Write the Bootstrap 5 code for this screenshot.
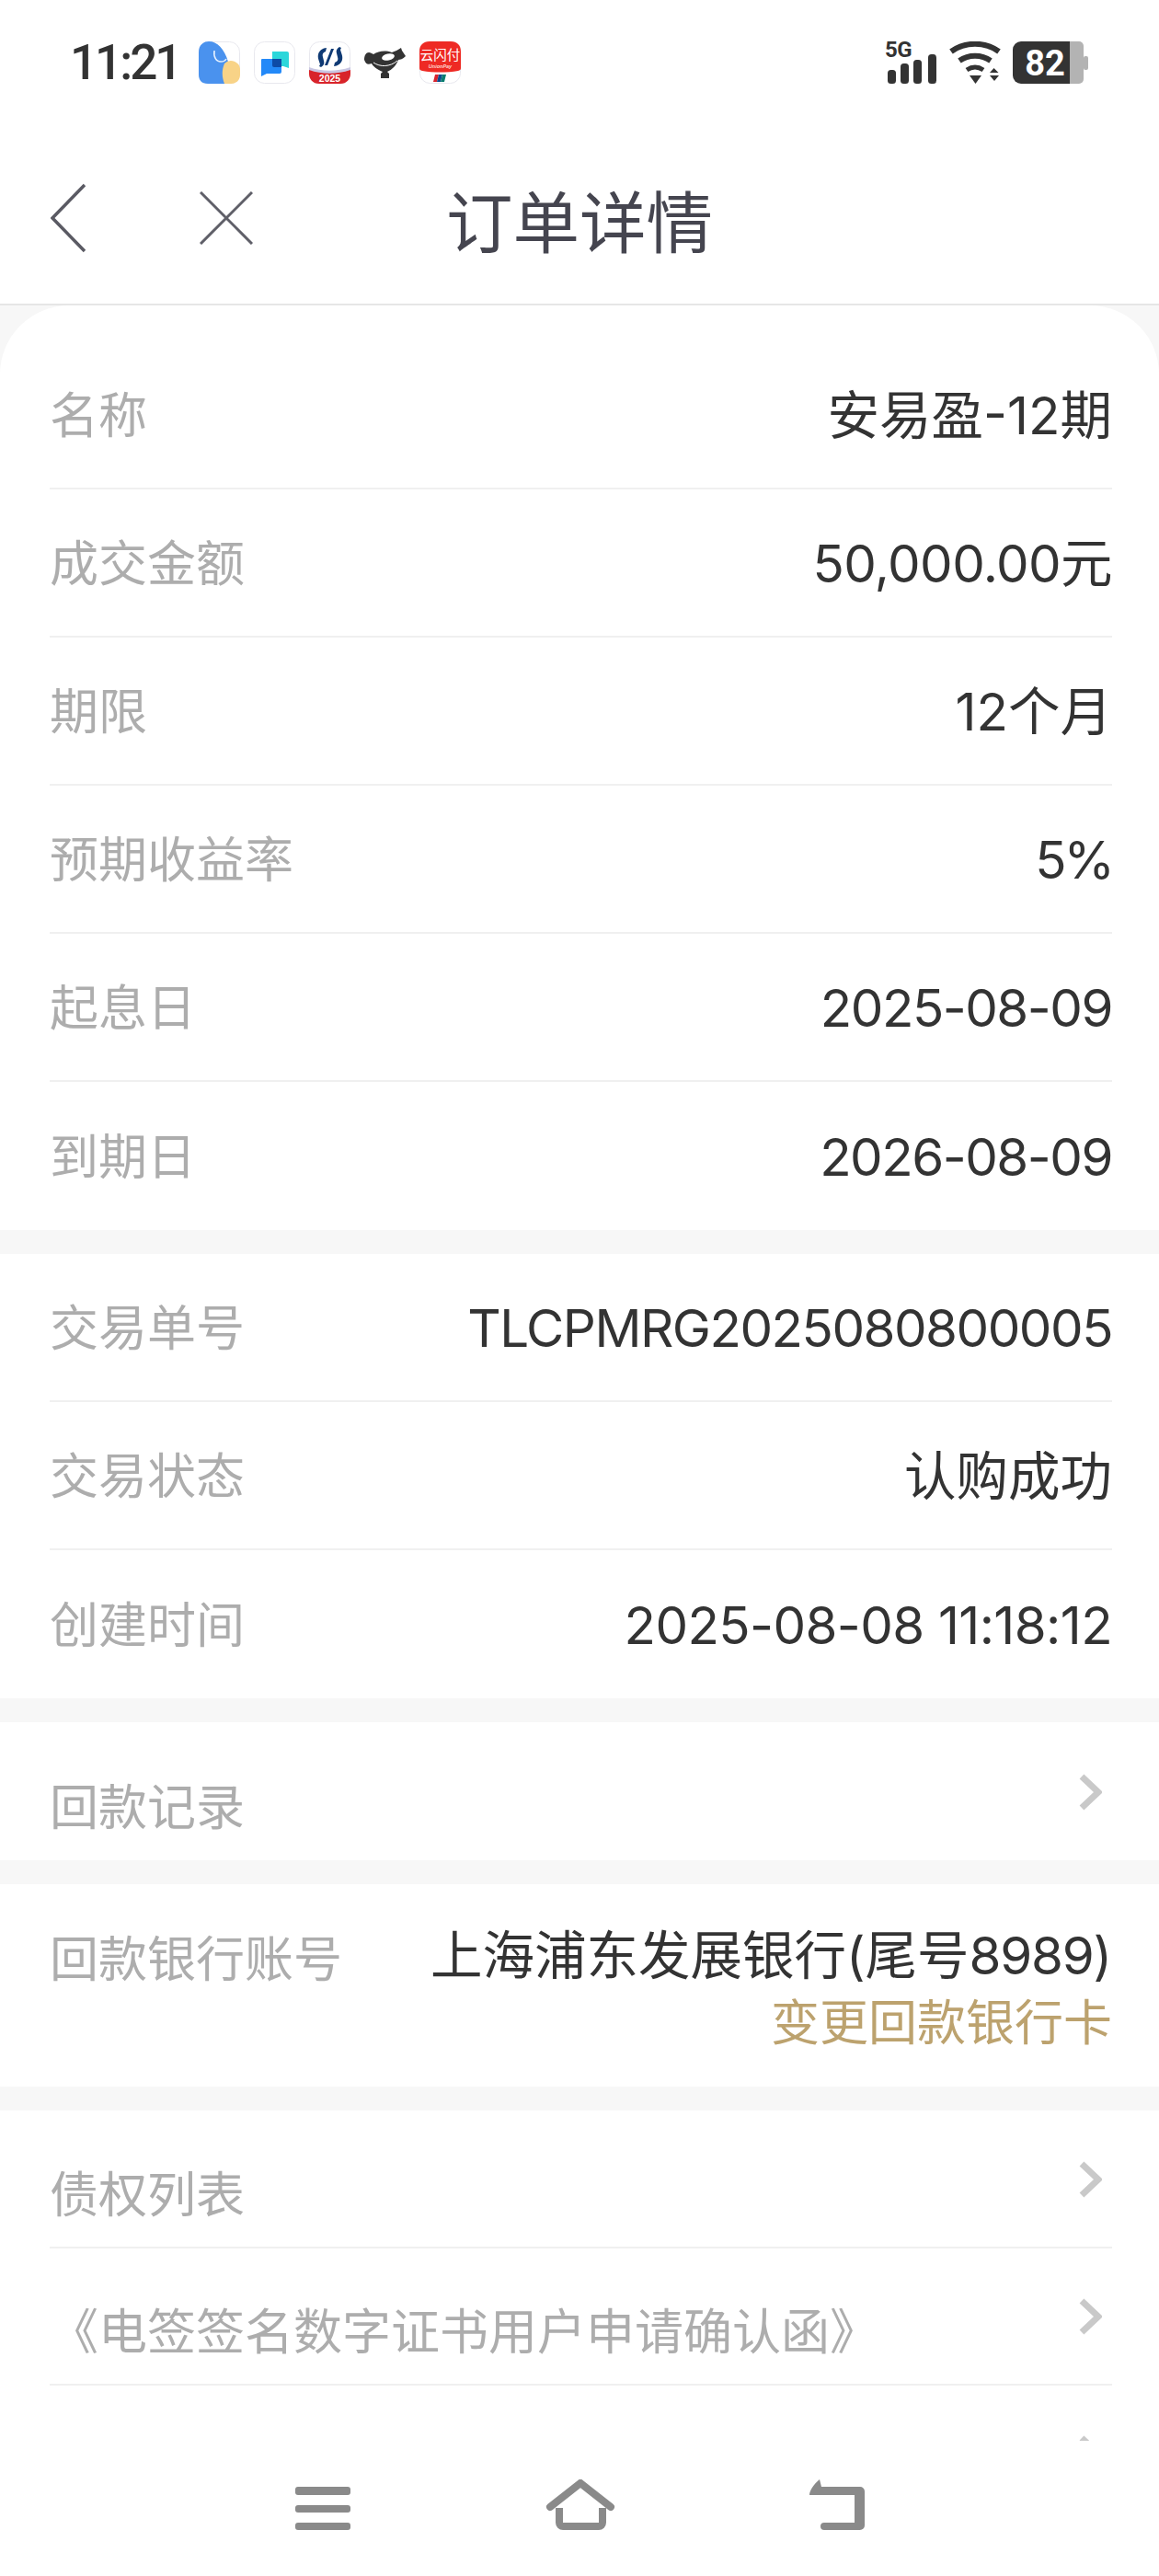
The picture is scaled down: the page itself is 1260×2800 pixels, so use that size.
<!DOCTYPE html>
<html lang="zh-CN">
<head>
<meta charset="utf-8">
<title>订单详情</title>
<link href="https://cdn.jsdelivr.net/npm/bootstrap@5.3.0/dist/css/bootstrap.min.css" rel="stylesheet">
<style>
html,body{margin:0;background:#f7f7f7}
body{font-family:Roboto,"Noto Sans CJK SC",sans-serif}
.phone{width:1260px;height:2800px;overflow:hidden;background:#f7f7f7}
.topbar{height:332px;background:#fff;border-bottom:2px solid #e6e6e6}
.status{height:110px;padding:45px 77px 0 76px}
.clock{font-size:53px;line-height:46px;font-weight:500;color:#333;letter-spacing:-3px;margin-right:26px;width:114px}
.notif{width:45px;height:46px;display:block}
.notif-row{gap:15px}
.sig{width:60px;height:56px;display:block;margin-top:-10px}
.wifi{width:57px;height:46px;display:block;margin:0 12px 0 13px}
.batt{width:82px;height:46px;display:block}
.titlebar{height:220px;padding-top:40px;display:grid;grid-template-columns:1fr auto 1fr;align-items:center;color:#45454f}
.titlebar h1{font-size:72.5px;font-weight:400;margin:-5px 0 0;line-height:90px;font-family:"Noto Sans CJK SC",sans-serif}
.nav-tools{padding-left:55px;gap:124px;margin-top:-7px}
.body-scroll{height:2321px;overflow:hidden}
.sheet{background:#fff;margin-bottom:26px}
.sheet-first{border-radius:75px 75px 0 0;padding-top:39px}
.sheet-links{padding-top:1px}
.info-row{margin:0 51px 0 54px;height:161px;border-bottom:2px solid #f0f0f0}
.info-row:last-child{border-bottom:0}
.lbl{color:#adadad;font-size:53px;font-family:"Noto Sans CJK SC",sans-serif;padding-bottom:3px}
.val{color:#333;font-size:56.5px;line-height:70px;font-family:Inter,"Noto Sans CJK SC",sans-serif;padding-top:2px}
.ls-wide{letter-spacing:-1.5px}
.ls-mid{letter-spacing:-.6px}
.ls-tight{letter-spacing:-3px}
.ls-num{letter-spacing:-1.3px}
.link-row{height:149px}
.link-row:last-child{border-bottom:2px solid #f0f0f0}
.link-row .lbl{padding-top:29px;padding-bottom:0}
.chev{margin-right:11px}
.bank-row{margin:0 51px 0 54px;height:220px;padding-top:43px}
.bank-row .lbl{line-height:70px;padding-bottom:0}
.bank-row .val{padding-top:0}
.gold{color:#bca26e;font-size:53px;line-height:69px;font-family:"Noto Sans CJK SC",sans-serif}
.softbar{height:147px;background:#fff;padding-top:40px}
.softbar svg{display:block}
.softbar-row{padding-left:321px;height:60px}
.sb-menu{margin-top:10px}
.sb-home{margin-left:212px;margin-top:2px}
.sb-back{margin-left:211px;margin-top:2px}
.no-line{border-bottom:0 !important}
</style>
</head>
<body>
<div class="phone d-flex flex-column">
  <header class="topbar flex-shrink-0">
    <div class="status d-flex justify-content-between align-items-start">
      <div class="d-flex align-items-start">
        <div class="clock">11:21</div>
        <div class="d-flex notif-row">
          <svg class="notif" viewBox="0 0 45 46"><rect x=".5" y=".5" width="44" height="45" rx="11" fill="#fff" stroke="#e8e8ee"/><path d="M0 12C0 3 6 0 11 0c9 0 17 8 21 22 4 8 6 14 3 24H10C3 46 0 42 0 36z" fill="#4a92ee"/><path d="M28 24a10 10 0 0 1 17 8v4c0 6-4 10-10 10h-7c-3-8-3-15 0-22z" fill="#f8d387"/><path d="M17 10c-1 7 2 12 7 12 3 0 5-1 6-3" fill="none" stroke="#e4f0ff" stroke-width="1.6"/></svg>
          <svg class="notif" viewBox="0 0 45 46"><rect x=".5" y=".5" width="44" height="45" rx="11" fill="#fff" stroke="#e8e8ee"/><path d="M20 11h16a2 2 0 0 1 2 2v16l-6-2H20z" fill="#2bd6da"/><path d="M9 19h19a2 2 0 0 1 2 2v12a2 2 0 0 1-2 2H14l-6 3V20a1 1 0 0 1 1-1z" fill="#2389f8"/><path d="M20 19h10v9h-8a2 2 0 0 1-2-2z" fill="#0d4ba6"/></svg>
          <svg class="notif" viewBox="0 0 45 46"><rect x=".5" y=".5" width="44" height="45" rx="11" fill="#fff" stroke="#e8e8ee"/><path d="M0 30c14 5 30 5 45 0v5c0 6-4 11-11 11H11C4 46 0 41 0 35z" fill="#d8242a"/><path d="M0 28c14 5 30 5 45 0v3C30 36 14 36 0 31z" fill="#c9c6e2"/><path d="M19 7l-1 4c-3 1-4 3-3 6l1 4c1 3 0 5-3 7l-2-1 1-2c-1-4-3-7-2-11 1-4 5-7 9-7zM27 27l1-4c3-1 4-3 3-6l-1-4c-1-3 0-5 3-7l2 1-1 2c1 4 3 7 2 11-1 4-5 7-9 7z" fill="#0f3a74"/><path d="M17 26l7-18h3l-7 18z" fill="#0f3a74"/><text x="22.5" y="43.5" text-anchor="middle" font-size="10.5" font-weight="700" fill="#fff" font-family="Liberation Sans">2025</text></svg>
          <svg class="notif" viewBox="0 0 45 46"><path d="M0 20c0-5 2-8 5-8 2 0 3 1 5 2 5-3 12-5 20-2 3-1 7-3 10-5l1 3 4 6c-3 3-6 4-8 4-2 6-7 11-12 13l2 2v5h-9v-5l2-2c-5-2-10-5-12-9-3 1-6 2-8-4z" fill="#333"/><ellipse cx="26" cy="17" rx="7" ry="3.5" fill="#fff" transform="rotate(-12 26 17)"/><path d="M10 23c7 5 18 5 26-2" fill="none" stroke="#fff" stroke-width="1"/></svg>
          <svg class="notif" viewBox="0 0 45 46"><rect x=".5" y=".5" width="44" height="45" rx="11" fill="#fff" stroke="#e8e8ee"/><path d="M0 11C0 4 4 0 11 0h23c7 0 11 4 11 11v18c0 2-1 2-3 3-12 2-27 2-39 0-2-1-3-1-3-3z" fill="#ee2a24"/><text x="22.500" y="20" text-anchor="middle" font-size="14.500" fill="#fff" font-family="Noto Sans CJK SC">云闪付</text><text x="22.5" y="28.500" text-anchor="middle" font-size="5.500" font-style="italic" font-weight="700" fill="#ffd7d2" font-family="Liberation Sans">UnionPay</text><path d="M17 36h4l-2 8h-4z" fill="#d9232e"/><path d="M21 36h4l-2 8h-4z" fill="#0d4a8e"/><path d="M25 36h4l-2 8h-4z" fill="#0a7d70"/></svg>
        </div>
      </div>
      <div class="d-flex align-items-start">
        <svg class="sig" viewBox="0 -10 60 56"><text x="3" y="17" font-size="24" font-weight="700" fill="#333" font-family="Roboto" letter-spacing="-.6">5G</text><g fill="#333"><rect x="6" y="31" width="9" height="15" rx="3.500"/><rect x="20" y="24" width="9" height="22" rx="3.500"/><rect x="34" y="20" width="9" height="26" rx="3.500"/><rect x="50" y="14" width="9" height="32" rx="3.500"/></g></svg>
        <svg class="wifi" viewBox="0 0 57 46"><g fill="none" stroke="#333" stroke-width="6"><path d="M2 11c15-11 37-11 52 0"/><path d="M11 21c10-7 24-7 34 0"/><path d="M19 31c6-4 12-4 18 0" stroke-width="5"/></g><g fill="#333"><path d="M22 37h13l-6.500 9z"/><path d="M44 34l4.500-5 5 5z"/><path d="M44 37h10l-5 6z"/></g></svg>
        <svg class="batt" viewBox="0 0 82 46"><path d="M62 0h10a5 5 0 0 1 5 5v36a5 5 0 0 1-5 5H62z" fill="#b3b3b3"/><rect x="77" y="16" width="5" height="15" rx="2" fill="#b3b3b3"/><path d="M9 0h53v46H9a9 9 0 0 1-9-9V9a9 9 0 0 1 9-9z" fill="#333"/><text x="35" y="37" text-anchor="middle" font-size="38" font-weight="700" fill="#fff" font-family="Roboto">82</text></svg>
      </div>
    </div>
    <div class="titlebar">
      <div class="d-flex nav-tools align-items-center">
        <svg width="38" height="76" viewBox="0 0 38 76"><path d="M37 2 2 38l35 36" fill="none" stroke="#5a5a63" stroke-width="3.500"/></svg>
        <svg width="58" height="58" viewBox="0 0 58 58"><path d="M1 1l56 56M57 1 1 57" fill="none" stroke="#5f5f68" stroke-width="3"/></svg>
      </div>
      <h1>订单详情</h1>
      <div></div>
    </div>
  </header>
  <main class="body-scroll">
    <section class="sheet sheet-first">
      <div class="info-row d-flex justify-content-between align-items-center"><span class="lbl">名称</span><span class="val">安易盈-12期</span></div>
      <div class="info-row d-flex justify-content-between align-items-center"><span class="lbl">成交金额</span><span class="val ls-mid">50,000.00元</span></div>
      <div class="info-row d-flex justify-content-between align-items-center"><span class="lbl">期限</span><span class="val">12个月</span></div>
      <div class="info-row d-flex justify-content-between align-items-center"><span class="lbl">预期收益率</span><span class="val ls-tight">5%</span></div>
      <div class="info-row d-flex justify-content-between align-items-center"><span class="lbl">起息日</span><span class="val ls-wide">2025-08-09</span></div>
      <div class="info-row d-flex justify-content-between align-items-center"><span class="lbl">到期日</span><span class="val ls-wide">2026-08-09</span></div>
    </section>
    <section class="sheet">
      <div class="info-row d-flex justify-content-between align-items-center"><span class="lbl">交易单号</span><span class="val ls-wide">TLCPMRG2025080800005</span></div>
      <div class="info-row d-flex justify-content-between align-items-center"><span class="lbl">交易状态</span><span class="val">认购成功</span></div>
      <div class="info-row d-flex justify-content-between align-items-center"><span class="lbl">创建时间</span><span class="val ls-mid">2025-08-08 11:18:12</span></div>
    </section>
    <section class="sheet sheet-links">
      <div class="info-row link-row no-line d-flex justify-content-between align-items-center"><span class="lbl">回款记录</span><svg class="chev" width="25" height="40" viewBox="0 0 25 40"><path d="M3 3l18 17L3 37" fill="none" stroke="#c9c9c9" stroke-width="7"/></svg></div>
    </section>
    <section class="sheet">
      <div class="bank-row d-flex justify-content-between align-items-start"><span class="lbl">回款银行账号</span><div class="text-end"><div class="val">上海浦东发展银行(尾号<span class="ls-num">8989</span>)</div><div class="gold">变更回款银行卡</div></div></div>
    </section>
    <section class="sheet sheet-links">
      <div class="info-row link-row d-flex justify-content-between align-items-center"><span class="lbl">债权列表</span><svg class="chev" width="25" height="40" viewBox="0 0 25 40"><path d="M3 3l18 17L3 37" fill="none" stroke="#c9c9c9" stroke-width="7"/></svg></div>
      <div class="info-row link-row d-flex justify-content-between align-items-center"><span class="lbl">《电签签名数字证书用户申请确认函》</span><svg class="chev" width="25" height="40" viewBox="0 0 25 40"><path d="M3 3l18 17L3 37" fill="none" stroke="#c9c9c9" stroke-width="7"/></svg></div>
      <div class="info-row link-row d-flex justify-content-end align-items-center"><svg class="chev" width="25" height="40" viewBox="0 0 25 40"><path d="M3 3l18 17L3 37" fill="none" stroke="#c9c9c9" stroke-width="7"/></svg></div>
    </section>
  </main>
  <nav class="softbar flex-shrink-0">
    <div class="softbar-row d-flex align-items-start">
      <svg class="sb-menu" width="60" height="60" viewBox="0 0 60 60"><g fill="#8a8a8a"><rect width="60" height="9" rx="3"/><rect y="20" width="60" height="8" rx="3"/><rect y="39" width="60" height="8" rx="3"/></g></svg>
      <svg class="sb-home" width="76" height="60" viewBox="0 0 76 60"><path d="M5 30 38 4l33 26" fill="none" stroke="#8a8a8a" stroke-width="8" stroke-linecap="round"/><path d="M15 31v16a4 4 0 0 0 4 4h39a4 4 0 0 0 4-4V31" fill="none" stroke="#8a8a8a" stroke-width="8"/></svg>
      <svg class="sb-back" width="64" height="60" viewBox="0 0 64 60"><path d="M0 17c0-5 5-12 11-17l2 8h42a5 5 0 0 1 5 5v37a5 5 0 0 1-5 5H16a4 4 0 0 1 0-8h33V17z" fill="#8a8a8a"/></svg>
    </div>
  </nav>
</div>
<script src="https://cdn.jsdelivr.net/npm/bootstrap@5.3.0/dist/js/bootstrap.bundle.min.js"></script>
</body>
</html>
